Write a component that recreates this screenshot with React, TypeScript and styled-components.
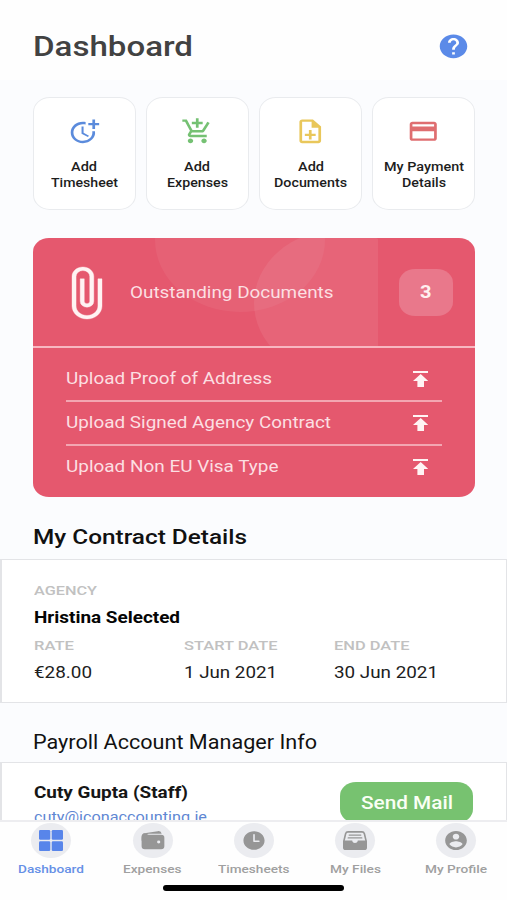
import React, { useLayoutEffect, useRef, useState } from "react";
import styled, { createGlobalStyle, css } from "styled-components";
import {
  MdAddShoppingCart,
  MdHelp,
  MdMoreTime,
  MdOutlineCreditCard,
  MdOutlineNoteAdd,
  MdPublish,
} from "react-icons/md";
import { IoTime, IoWallet } from "react-icons/io5";

const GlobalStyle = createGlobalStyle`
  * { box-sizing: border-box; }
  body { margin: 0; background: #fff; font-family: Roboto, sans-serif; }
`;

/* ---------- wide text ---------- */

const WideBox = styled.span<{ $width: number }>`
  display: flex;
  flex: none;
  width: ${(p) => p.$width}px;
`;

const WideInner = styled.span`
  flex: none;
  white-space: nowrap;
  transform-origin: 0 50%;
`;

/** Single line of text whose letters are widened to fill the given width. */
function Wide({ width, children }: { width: number; children: string }) {
  const ref = useRef<HTMLSpanElement>(null);
  const [scale, setScale] = useState(1);
  useLayoutEffect(() => {
    if (ref.current) setScale(width / (ref.current.getBoundingClientRect().width / scale));
  }, [width, children]);
  return (
    <WideBox $width={width}>
      <WideInner ref={ref} style={{ transform: `scaleX(${scale})` }}>
        {children}
      </WideInner>
    </WideBox>
  );
}

/* ---------- page ---------- */

const Screen = styled.div`
  width: 507px;
  height: 900px;
  display: flex;
  flex-direction: column;
  overflow: hidden;
  background: #fff;
`;

const Header = styled.header`
  flex: none;
  height: 80px;
  padding: 13px 37.5px 0 32.5px;
  display: flex;
  align-items: center;
  justify-content: space-between;
  background: #fefefe;
`;

const Title = styled.h1`
  margin: 0;
  font-size: 27.5px;
  line-height: 34px;
  font-weight: 500;
  color: #424242;
`;

const HelpButton = styled.button`
  display: flex;
  border: 0;
  padding: 0;
  background: none;
  color: #5b8ae8;
  svg { width: 33px; height: 28.5px; margin-top: -1.5px; }
`;

const Content = styled.main`
  flex: 1;
  min-height: 0;
  overflow: hidden;
  background: #fbfcfe;
`;

const Tiles = styled.div`
  display: grid;
  grid-template-columns: repeat(4, 1fr);
  gap: 10.6px;
  padding: 17px 32px 0 33px;
`;

const Tile = styled.div`
  height: 113px;
  display: flex;
  flex-direction: column;
  align-items: center;
  padding-top: 19px;
  border: 1px solid #e9ebee;
  border-radius: 17px / 15px;
  background: #fff;
  font-size: 12.6px;
  line-height: 16px;
  font-weight: 500;
  color: #1d1d1d;
`;

const TileIcon = styled.div<{ $color: string }>`
  display: flex;
  margin-bottom: 13px;
  color: ${(p) => p.$color};
  svg { width: 32.5px; height: 28.5px; }
`;

/* ---------- outstanding documents ---------- */

const Alert = styled.section`
  margin: 28px 32px 0 33px;
  height: 259px;
  border-radius: 16px / 14px;
  overflow: hidden;
  background: #e5586e;
  color: #fcdfe2;
  font-size: 16.5px;
`;

const AlertHead = styled.div`
  position: relative;
  height: 110px;
  display: flex;
  align-items: center;
  padding: 0 22px 0 39px;
  border-bottom: 2px solid #f8b7c1;
`;

const AlertArt = styled.svg`
  position: absolute;
  left: 0;
  top: 0;
  width: 345px;
  height: 108px;
`;

const Clip = styled.div`
  position: relative;
  display: flex;
  width: 30px;
  margin-right: 28px;
  color: #fff3f3;
  svg {
    width: 30px;
    height: 52px;
    margin-top: 2px;
    overflow: visible;
  }
`;

const AlertTitle = styled.div`
  position: relative;
  flex: 1;
`;

const Count = styled.div`
  position: relative;
  width: 54px;
  height: 47px;
  display: flex;
  align-items: center;
  justify-content: center;
  border-radius: 16px / 14px;
  background: #e9788b;
  color: #fff0f0;
  font-size: 17.5px;
  font-weight: 700;
`;

const TaskList = styled.div`
  padding: 8px 33px 0 32.5px;
`;

const Task = styled.div`
  height: 44px;
  display: flex;
  align-items: center;
  justify-content: space-between;
  padding: 0 14px 1px 0;
  &:first-child { padding: 1px 14px 0 0; }
  & + & { border-top: 2px solid #f3a6b2; }
  svg { width: 15.4px; height: 16px; margin-top: 1px; color: #fff4f4; }
`;

/* ---------- detail panels ---------- */

const heading = css`
  margin: 0;
  line-height: 26px;
  color: #111;
`;

const ContractHeading = styled.h2`
  ${heading}
  padding: 27px 0 9px 32.5px;
  font-size: 20px;
  font-weight: 500;
`;

const ManagerHeading = styled.h2`
  ${heading}
  padding: 27px 0 6px 32.5px;
  font-size: 19.5px;
  font-weight: 400;
`;

const Panel = styled.section<{ $height: number }>`
  height: ${(p) => p.$height}px;
  padding: 20px 33px 0 32.3px;
  border: 1px solid #e3e4e7;
  border-left-width: 2px;
  background: #fff;
`;

const Fields = styled.div`
  display: grid;
  grid-template-columns: repeat(3, 150px);
`;

const FieldLabel = styled.div`
  font-size: 13.5px;
  line-height: 20px;
  font-weight: 500;
  color: #c1c1c1;
`;

const FieldValue = styled.div<{ $strong?: boolean }>`
  padding-top: 1px;
  font-size: 16px;
  line-height: 34px;
  font-weight: ${(p) => (p.$strong ? 700 : 400)};
  color: ${(p) => (p.$strong ? "#050505" : "#202020")};
`;

const ManagerRow = styled.div`
  display: flex;
  justify-content: space-between;
  margin-top: -1px;
`;

const ManagerName = styled.div`
  font-size: 16px;
  line-height: 22px;
  font-weight: 700;
  color: #161616;
`;

const ManagerMail = styled.div`
  padding-top: 2px;
  font-size: 15px;
  line-height: 22px;
  color: #6087d3;
`;

const MailButton = styled.button`
  width: 133px;
  height: 41px;
  display: flex;
  align-items: center;
  justify-content: center;
  border: 0;
  padding: 0;
  border-radius: 16px / 14px;
  background: #77c270;
  color: #fafff5;
  font: 500 18.5px Roboto, sans-serif;
`;

/* ---------- bottom navigation ---------- */

const Nav = styled.nav`
  flex: none;
  height: 80px;
  border-top: 2px solid #ededf0;
  background: #fefefe;
`;

const NavItems = styled.div`
  height: 63px;
  display: grid;
  grid-template-columns: repeat(5, 101.25px);
  padding-left: 0.8px;
`;

const NavItem = styled.div<{ $active?: boolean }>`
  display: flex;
  flex-direction: column;
  align-items: center;
  padding-top: 1px;
  font-size: 11.8px;
  line-height: 16px;
  font-weight: 500;
  color: ${(p) => (p.$active ? "#6690e6" : "#a0a0a0")};
`;

const NavDisc = styled.div<{ $active?: boolean }>`
  width: 40px;
  height: 35px;
  display: flex;
  align-items: center;
  justify-content: center;
  margin-bottom: 3px;
  border-radius: 50%;
  background: #ebecf0;
  color: ${(p) => (p.$active ? "#5885ea" : "#969696")};
  svg { width: 26px; height: 23px; }
`;

const HomeBar = styled.div`
  width: 181px;
  height: 6px;
  margin: 0 auto;
  border-radius: 3px;
  background: #000;
`;

const ClipIcon = () => (
  <svg viewBox="7 1 11 22" preserveAspectRatio="none" fill="currentColor" stroke="currentColor" strokeWidth="0.15">
    <path d="M16.5 6v11.5c0 2.21-1.79 4-4 4s-4-1.79-4-4V5a2.5 2.5 0 0 1 5 0v10.5c0 .55-.45 1-1 1s-1-.45-1-1V6H10v9.5a2.5 2.5 0 0 0 5 0V5c0-2.21-1.79-4-4-4S7 2.79 7 5v12.5c0 3.04 2.46 5.5 5.5 5.5s5.5-2.46 5.5-5.5V6h-1.5z" />
  </svg>
);

const GridIcon = () => (
  <svg viewBox="0 0 26 23" fill="currentColor">
    <rect x="1" y="1" width="11.3" height="9.8" rx="1.3" />
    <rect x="13.7" y="1" width="11.3" height="9.8" rx="1.3" />
    <rect x="1" y="12.2" width="11.3" height="9.8" rx="1.3" />
    <rect x="13.7" y="12.2" width="11.3" height="9.8" rx="1.3" />
  </svg>
);

const TrayIcon = () => (
  <svg viewBox="0 0 26 23" fill="currentColor">
    <path d="M1 11.5h9.2c.3 1.8 1.4 2.5 2.8 2.5s2.5-.7 2.8-2.5H25v7.2c0 1.5-1 2.3-2.5 2.3h-19C2 21 1 20.2 1 18.7z" />
    <path
      d="M1.9 12 3.6 4.7C4 3.4 4.7 2.9 6 2.9h14c1.3 0 2 .5 2.4 1.8L24.1 12"
      fill="none"
      stroke="currentColor"
      strokeWidth="1.6"
    />
    <path d="M7.2 6.1h11.6M6.2 8.9h13.6" stroke="currentColor" strokeWidth="1.3" strokeLinecap="round" />
  </svg>
);

const ProfileIcon = () => (
  <svg viewBox="0 0 24 24" preserveAspectRatio="none" fill="currentColor">
    <path d="M12 2C6.48 2 2 6.48 2 12s4.48 10 10 10 10-4.48 10-10S17.52 2 12 2zm0 3c1.66 0 3 1.34 3 3s-1.34 3-3 3-3-1.34-3-3 1.34-3 3-3zm0 14.2c-2.5 0-4.71-1.28-6-3.22.03-1.99 4-3.08 6-3.08 1.99 0 5.97 1.09 6 3.08-1.29 1.94-3.5 3.22-6 3.22z" />
  </svg>
);

const flat = { preserveAspectRatio: "none" };

const tiles = [
  { icon: <MdMoreTime {...flat} />, color: "#5b8bdc", lines: [["Add", 26], ["Timesheet", 67]] },
  { icon: <MdAddShoppingCart {...flat} />, color: "#75c173", lines: [["Add", 26], ["Expenses", 61]] },
  { icon: <MdOutlineNoteAdd {...flat} />, color: "#e9c75b", lines: [["Add", 26], ["Documents", 73]] },
  { icon: <MdOutlineCreditCard {...flat} />, color: "#df6e70", lines: [["My Payment", 80], ["Details", 44]] },
] as { icon: React.ReactNode; color: string; lines: [string, number][] }[];

const tasks: [string, number][] = [
  ["Upload Proof of Address", 206],
  ["Upload Signed Agency Contract", 265],
  ["Upload Non EU Visa Type", 212.5],
];

const fields: [string, number, string, number][] = [
  ["RATE", 40, "€28.00", 58],
  ["START DATE", 93.5, "1 Jun 2021", 93],
  ["END DATE", 75.5, "30 Jun 2021", 104],
];

const navItems: [string, number, React.ReactNode][] = [
  ["Dashboard", 66, <GridIcon />],
  ["Expenses", 58.5, <IoWallet {...flat} />],
  ["Timesheets", 71.5, <IoTime {...flat} />],
  ["My Files", 51, <TrayIcon />],
  ["My Profile", 62, <ProfileIcon />],
];

export default function App() {
  return (
    <Screen>
      <GlobalStyle />
      <Header>
        <Title><Wide width={160}>Dashboard</Wide></Title>
        <HelpButton aria-label="Help"><MdHelp {...flat} /></HelpButton>
      </Header>
      <Content>
        <Tiles>
          {tiles.map((t, i) => (
            <Tile key={i}>
              <TileIcon $color={t.color}>{t.icon}</TileIcon>
              {t.lines.map(([text, w]) => <Wide key={text} width={w}>{text}</Wide>)}
            </Tile>
          ))}
        </Tiles>
        <Alert>
          <AlertHead>
            <AlertArt viewBox="0 0 345 108" fill="#fff">
              <ellipse cx="207" cy="2" rx="85" ry="72" fillOpacity="0.055" />
              <ellipse cx="305" cy="65" rx="84" ry="73" fillOpacity="0.075" />
            </AlertArt>
            <Clip><ClipIcon /></Clip>
            <AlertTitle><Wide width={203.5}>Outstanding Documents</Wide></AlertTitle>
            <Count><Wide width={11.5}>3</Wide></Count>
          </AlertHead>
          <TaskList>
            {tasks.map(([text, w]) => (
              <Task key={text}>
                <Wide width={w}>{text}</Wide>
                <MdPublish {...flat} viewBox="5 4 14 16" />
              </Task>
            ))}
          </TaskList>
        </Alert>
        <ContractHeading><Wide width={214}>My Contract Details</Wide></ContractHeading>
        <Panel $height={144}>
          <FieldLabel><Wide width={63}>AGENCY</Wide></FieldLabel>
          <FieldValue $strong><Wide width={146}>Hristina Selected</Wide></FieldValue>
          <Fields>
            {fields.map(([label, lw, value, vw]) => (
              <div key={label}>
                <FieldLabel><Wide width={lw}>{label}</Wide></FieldLabel>
                <FieldValue><Wide width={vw}>{value}</Wide></FieldValue>
              </div>
            ))}
          </Fields>
        </Panel>
        <ManagerHeading><Wide width={284}>Payroll Account Manager Info</Wide></ManagerHeading>
        <Panel $height={120}>
          <ManagerRow>
            <div>
              <ManagerName><Wide width={154}>Cuty Gupta (Staff)</Wide></ManagerName>
              <ManagerMail><Wide width={173}>cuty@iconaccounting.ie</Wide></ManagerMail>
            </div>
            <MailButton><Wide width={92}>Send Mail</Wide></MailButton>
          </ManagerRow>
        </Panel>
      </Content>
      <Nav>
        <NavItems>
          {navItems.map(([label, w, icon], i) => (
            <NavItem key={label} $active={i === 0}>
              <NavDisc $active={i === 0}>{icon}</NavDisc>
              <Wide width={w}>{label}</Wide>
            </NavItem>
          ))}
        </NavItems>
        <HomeBar />
      </Nav>
    </Screen>
  );
}
